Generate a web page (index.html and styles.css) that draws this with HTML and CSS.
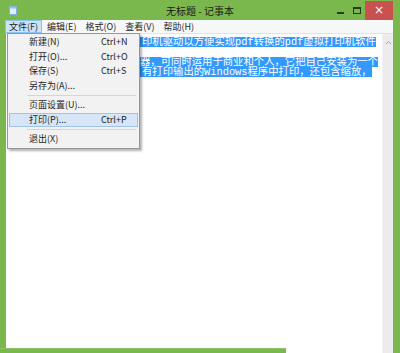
FILE: index.html
```html
<!DOCTYPE html>
<html lang="zh">
<head>
<meta charset="utf-8">
<title>无标题 - 记事本</title>
<link rel="stylesheet" href="styles.css">
</head>
<body>
<div class="window">
  <div class="titlebar">
    <div class="tb-left">
      <svg class="app-icon" width="8" height="9" viewBox="0 0 8 9">
        <rect x="0.5" y="0.5" width="7" height="8" fill="#dff0fb" stroke="#7fb2d6"/>
        <rect x="0.5" y="0.5" width="7" height="2" fill="#8fc3e6"/>
      </svg>
    </div>
    <div class="title">无标题 - 记事本</div>
    <div class="controls">
      <span class="btn-min"></span>
      <span class="btn-max"></span>
      <span class="btn-close">×</span>
    </div>
  </div>
  <div class="menubar">
    <span class="mb-item active">文件(F)</span>
    <span class="mb-item">编辑(E)</span>
    <span class="mb-item">格式(O)</span>
    <span class="mb-item">查看(V)</span>
    <span class="mb-item">帮助(H)</span>
  </div>
  <div class="client">
    <div class="editor">
      <div class="line"><span class="sel"><span class="cut"></span>印机驱动以方便实现pdf转换的pdf虚拟打印机软件</span></div>
      <div class="line"></div>
      <div class="line"><span class="sel"><span class="cut cut-b"></span>器，可同时运用于商业和个人，它把自己安装为一个</span></div>
      <div class="line"><span class="sel"><span class="cut"></span>有打印输出的Windows程序中打印，还包含缩放，</span></div>
    </div>
    <div class="scrollbar">
      <svg width="7" height="5" viewBox="0 0 7 5"><path d="M1 4 L3.5 1.5 L6 4" fill="none" stroke="#a0a0a0" stroke-width="1"/></svg>
    </div>
  </div>
  <div class="bottom-edge"></div>

  <div class="dropdown">
    <div class="dd-item"><span>新建(N)</span><span>Ctrl+N</span></div>
    <div class="dd-item"><span>打开(O)...</span><span>Ctrl+O</span></div>
    <div class="dd-item"><span>保存(S)</span><span>Ctrl+S</span></div>
    <div class="dd-item"><span>另存为(A)...</span><span></span></div>
    <div class="dd-sep"></div>
    <div class="dd-item"><span>页面设置(U)...</span><span></span></div>
    <div class="dd-item hover"><span>打印(P)...</span><span>Ctrl+P</span></div>
    <div class="dd-sep"></div>
    <div class="dd-item"><span>退出(X)</span><span></span></div>
  </div>
</div>
</body>
</html>
```

FILE: styles.css
```css
* { box-sizing: border-box; }
html, body { margin: 0; padding: 0; }
body {
  width: 400px;
  height: 353px;
  overflow: hidden;
  font-family: "Noto Sans CJK SC", "Noto Sans", sans-serif;
}
.window {
  position: relative;
  width: 400px;
  height: 353px;
  background: #7ab84e;
  display: flex;
  flex-direction: column;
}
.titlebar {
  height: 20px;
  display: grid;
  grid-template-columns: 1fr auto 1fr;
  align-items: center;
}
.tb-left { display: flex; align-items: center; padding-left: 9px; }
.app-icon { display: block; }
.title {
  font-size: 10px;
  color: #1a1a1a;
  line-height: 20px;
  padding-top: 1px;
}
.controls {
  display: flex;
  justify-content: flex-end;
  align-items: flex-start;
  height: 20px;
  padding-right: 7px;
}
.btn-min {
  width: 7px;
  height: 2px;
  background: #2a3a20;
  margin-top: 11px;
  margin-right: 9px;
}
.btn-max {
  width: 8px;
  height: 7px;
  border: 1px solid #2a3a20;
  border-top-width: 2px;
  margin-top: 6px;
  margin-right: 4px;
}
.btn-close {
  width: 28px;
  height: 19px;
  background: #c9514f;
  color: #fff;
  font-size: 12px;
  line-height: 18px;
  text-align: center;
  font-family: "DejaVu Sans", sans-serif;
}
.menubar {
  height: 13px;
  margin: 0 7px 0 5px;
  background: #f6f7f9;
  display: flex;
  align-items: stretch;
  font-size: 9px;
  color: #1e1e1e;
}
.mb-item {
  display: flex;
  align-items: center;
  padding: 0 3px 0 3px;
  margin-right: 1px;
  border: 1px solid transparent;
  line-height: 11px;
}
.mb-item.active {
  background: #cce4f7;
  border-color: #8cc2ee;
}
.client {
  flex: 1;
  display: flex;
  margin: 0 7px 0 6px;
  background: #fff;
  border-top: 1px solid #e3e3e3;
  min-height: 0;
}
.editor {
  flex: 1;
  padding: 3px 0 0 3px;
  font-family: "Liberation Mono", "Noto Sans CJK SC", monospace;
  font-size: 10.35px;
  overflow: hidden;
}
.line {
  height: 10px;
  line-height: 10px;
  white-space: nowrap;
}
.sel {
  background: #3399ff;
  color: #fff;
  display: inline-block;
  height: 10px;
}
.cut {
  display: inline-block;
  width: 133px;
  height: 10px;
  vertical-align: top;
}
.cut-b { width: 131px; }
.scrollbar {
  width: 11px;
  background: #ececec;
  border-left: 1px solid #f3f3f3;
  display: flex;
  justify-content: center;
  padding-top: 6px;
}
.scrollbar svg { display: block; }
.bottom-edge {
  position: absolute;
  left: 0;
  bottom: 0;
  width: 286px;
  height: 5px;
  background: #7ab84e;
  border-top: 1px solid #8cc466;
}
.dropdown {
  position: absolute;
  left: 7px;
  top: 33px;
  width: 133px;
  padding: 1px;
  background: #f2f2f2;
  border: 1px solid #979797;
  box-shadow: 2px 2px 2px rgba(0,0,0,0.3);
  font-size: 9px;
  color: #1e1e1e;
}
.dd-item {
  height: 14.5px;
  display: grid;
  grid-template-columns: 72px auto;
  align-items: center;
  padding-left: 19px;
  border: 1px solid transparent;
  line-height: 12px;
}
.dd-item.hover {
  background: #d6e6f7;
  border-color: #9fc3ea;
}
.dd-sep {
  height: 5px;
  margin: 0 2px 0 18px;
  position: relative;
}
.dd-sep::after {
  content: "";
  position: absolute;
  left: 0; right: 0; top: 2px;
  height: 1px;
  background: #d5d5d5;
}
```
